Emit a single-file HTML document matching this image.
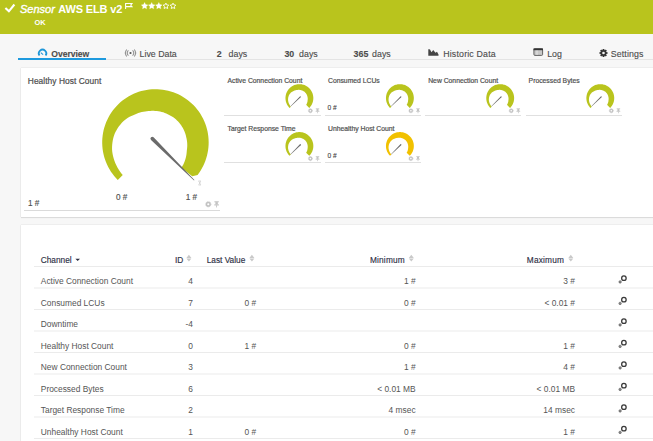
<!DOCTYPE html>
<html><head><meta charset="utf-8">
<style>
html,body{margin:0;padding:0;}
body{width:653px;height:441px;overflow:hidden;position:relative;background:#f7f7f7;font-family:"Liberation Sans",sans-serif;}
.t{position:absolute;white-space:nowrap;line-height:1;}
.hdr{position:absolute;left:0;top:0;width:653px;height:34px;background:#b9c41d;}
.panel{position:absolute;background:#fff;box-shadow:0 0 1px rgba(0,0,0,0.22),0 1px 1px rgba(0,0,0,0.08);}
.tab{color:#4c4c4c;font-size:8.8px;-webkit-text-stroke:0.12px #4c4c4c;}
.b{font-weight:bold;}
.sg{position:absolute;}
.line{position:absolute;height:1px;background:#e0e0e0;}
.ttl{color:#505050;font-size:6.8px;-webkit-text-stroke:0.2px #505050;}
.gt{color:#4e4e4e;-webkit-text-stroke:0.2px #4e4e4e;}
.gv{color:#505050;font-size:8.2px;-webkit-text-stroke:0.15px #505050;}
.sv{color:#404040;font-size:6.6px;-webkit-text-stroke:0.1px #404040;}
.th{color:#2e2f45;font-size:8.3px;-webkit-text-stroke:0.15px #2e2f45;}
.td{color:#555;font-size:8.4px;}
.r{text-align:right;}
.gr{position:absolute;}
.rl{position:absolute;left:34px;width:619px;height:1px;background:#ececec;}
</style></head>
<body>
<div class="hdr"></div>
<!-- header -->
<svg style="position:absolute;left:0;top:0" width="200" height="34">
  <path d="M5.4 7.9 L8.9 11.3 L14.4 4.5" stroke="#fff" stroke-width="2.1" fill="none"/>
  <path d="M125.6 9 V3.5 H132 L130.7 5.1 L132 6.6 H125.6" stroke="#fff" stroke-width="1.05" fill="none"/>
</svg>
<div class="t" style="left:20px;top:3.8px;font-size:11px;font-style:italic;color:#fff;-webkit-text-stroke:0.35px #fff;">Sensor</div>
<div class="t b" style="left:58.3px;top:3.9px;font-size:11px;color:#fff;letter-spacing:-0.15px;">AWS ELB v2</div>
<svg style="position:absolute;left:0;top:0" width="200" height="20"><polygon points="144.60,2.50 145.63,4.58 147.93,4.92 146.26,6.54 146.66,8.83 144.60,7.75 142.54,8.83 142.94,6.54 141.27,4.92 143.57,4.58" fill="#fff" stroke="#fff" stroke-width="0.3" stroke-linejoin="round"/><polygon points="151.70,2.50 152.73,4.58 155.03,4.92 153.36,6.54 153.76,8.83 151.70,7.75 149.64,8.83 150.04,6.54 148.37,4.92 150.67,4.58" fill="#fff" stroke="#fff" stroke-width="0.3" stroke-linejoin="round"/><polygon points="158.80,2.50 159.83,4.58 162.13,4.92 160.46,6.54 160.86,8.83 158.80,7.75 156.74,8.83 157.14,6.54 155.47,4.92 157.77,4.58" fill="#fff" stroke="#fff" stroke-width="0.3" stroke-linejoin="round"/><polygon points="165.90,3.10 166.78,4.89 168.75,5.17 167.33,6.56 167.66,8.53 165.90,7.60 164.14,8.53 164.47,6.56 163.05,5.17 165.02,4.89" fill="none" stroke="#fff" stroke-width="0.9" stroke-linejoin="round"/><polygon points="173.00,3.10 173.88,4.89 175.85,5.17 174.43,6.56 174.76,8.53 173.00,7.60 171.24,8.53 171.57,6.56 170.15,5.17 172.12,4.89" fill="none" stroke="#fff" stroke-width="0.9" stroke-linejoin="round"/></svg>
<div class="t" style="left:34.6px;top:19px;font-size:7.4px;font-weight:bold;color:#fff;letter-spacing:-0.1px;">OK</div>

<!-- tabs -->
<div style="position:absolute;left:18px;top:59px;width:635px;height:1px;background:#e4e4e4;"></div>
<svg style="position:absolute;left:0;top:40px" width="653" height="20">
  <path d="M39.48 15.6 A3.75 3.75 0 1 1 45.62 15.6" stroke="#1e96d8" stroke-width="1.75" fill="none"/>
  <path d="M40.8 12.6 L43.1 14.7" stroke="#1e96d8" stroke-width="1.1"/>
  <g stroke="#666" fill="none" stroke-width="0.8">
    <path d="M128.2 10.3 A4.2 4.2 0 0 0 128.2 15.7"/>
    <path d="M126.5 9.5 A5.8 5.8 0 0 0 126.5 16.5"/>
    <path d="M132.8 10.3 A4.2 4.2 0 0 1 132.8 15.7"/>
    <path d="M134.5 9.5 A5.8 5.8 0 0 1 134.5 16.5"/>
  </g>
  <circle cx="130.5" cy="13" r="1.1" fill="#555"/>
  <path d="M428.3 9.2 V15.8 H438.5 V14.5 L437 11.8 L435.5 12.8 L433.2 10 L431.5 12.2 L430 9.4 L429.2 9.2 Z" fill="#444"/>
  <rect x="533.9" y="8.8" width="8.7" height="6.6" rx="1" fill="#c8c8c8" stroke="#555" stroke-width="0.9"/>
  <rect x="533.5" y="8.4" width="9.5" height="1.8" fill="#333"/>
  <line x1="537" y1="10.5" x2="537" y2="15" stroke="#eee" stroke-width="0.8"/>
</svg>
<svg style="position:absolute;left:598.5px;top:48.5px" width="9" height="8" viewBox="-4.5 -4 9 8">
  <g fill="#333">
    <circle r="2.9"/>
    <g id="tooth"><rect x="-0.9" y="-4" width="1.8" height="8"/></g>
    <rect x="-0.9" y="-4" width="1.8" height="8" transform="rotate(45)"/>
    <rect x="-0.9" y="-4" width="1.8" height="8" transform="rotate(90)"/>
    <rect x="-0.9" y="-4" width="1.8" height="8" transform="rotate(135)"/>
  </g>
  <circle r="1.3" fill="#f4f4f4"/>
</svg>
<div class="t tab b" style="left:51.3px;top:50px;font-size:8.6px;letter-spacing:-0.03px;">Overview</div>
<div style="position:absolute;left:18px;top:58px;width:88px;height:2px;background:#1e9ade;"></div>
<div class="t tab" style="left:139.6px;top:50px;">Live Data</div>
<div class="t tab b" style="left:216.7px;top:50px;">2</div>
<div class="t tab" style="left:228.5px;top:50px;letter-spacing:0.05px;">days</div>
<div class="t tab b" style="left:284.4px;top:50px;">30</div>
<div class="t tab" style="left:299px;top:50px;letter-spacing:0.05px;">days</div>
<div class="t tab b" style="left:353.5px;top:50px;letter-spacing:0.1px;">365</div>
<div class="t tab" style="left:372px;top:50px;letter-spacing:0.05px;">days</div>
<div class="t tab" style="left:443.2px;top:50px;letter-spacing:0.18px;">Historic Data</div>
<div class="t tab" style="left:547.2px;top:50px;">Log</div>
<div class="t tab" style="left:610.7px;top:50px;letter-spacing:0.15px;">Settings</div>

<!-- panel 1 -->
<div class="panel" style="left:21px;top:68px;width:640px;height:149px;"></div>
<div class="t gt" style="left:27.8px;top:77.1px;font-size:8.4px;letter-spacing:0.05px;">Healthy Host Count</div>
<div class="t gv" style="left:116px;top:194px;">0 #</div>
<div class="t gv" style="left:185.7px;top:194px;">1 #</div>
<div class="t gv" style="left:28px;top:200px;">1 #</div>
<div class="line" style="left:24px;top:210px;width:196px;background:#dadada;"></div>
<div class="t ttl" style="left:227.5px;top:78px;">Active Connection Count</div>
<div class="t ttl" style="left:328px;top:78px;">Consumed LCUs</div>
<div class="t ttl" style="left:428.2px;top:78px;">New Connection Count</div>
<div class="t ttl" style="left:528.6px;top:78px;">Processed Bytes</div>
<div class="t ttl" style="left:227.5px;top:126px;">Target Response Time</div>
<div class="t ttl" style="left:328px;top:126px;">Unhealthy Host Count</div>
<div class="t sv" style="left:327.6px;top:105.4px;">0 #</div>
<div class="t sv" style="left:327.6px;top:153.3px;">0 #</div>
<div class="line" style="left:224px;top:115px;width:97px;"></div>
<div class="line" style="left:325px;top:115px;width:96px;"></div>
<div class="line" style="left:425px;top:115px;width:96px;"></div>
<div class="line" style="left:525.5px;top:115px;width:96px;"></div>
<div class="line" style="left:224px;top:162px;width:97px;"></div>
<div class="line" style="left:325px;top:162px;width:96px;"></div>
<svg style="position:absolute;left:0;top:0" width="653" height="441">
<path d="M117.79 180.04 L115.92 178.07 L114.16 176.02 L112.50 173.87 L110.95 171.65 L109.52 169.35 L108.21 166.97 L107.02 164.54 L105.96 162.05 L105.02 159.50 L104.22 156.91 L103.54 154.29 L103.01 151.63 L102.60 148.95 L102.34 146.25 L102.21 143.55 L102.22 140.84 L102.37 138.13 L102.66 135.43 L103.08 132.76 L103.64 130.10 L104.33 127.48 L105.16 124.90 L106.11 122.37 L107.20 119.88 L108.41 117.46 L109.74 115.09 L111.19 112.80 L112.75 110.59 L114.42 108.46 L116.21 106.42 L118.09 104.47 L120.07 102.61 L122.14 100.87 L124.30 99.22 L126.53 97.70 L128.85 96.28 L131.23 94.99 L133.67 93.82 L136.17 92.77 L138.73 91.86 L141.32 91.07 L143.95 90.42 L146.61 89.91 L149.30 89.52 L151.99 89.28 L154.70 89.17 L157.41 89.21 L160.12 89.38 L162.81 89.68 L165.49 90.13 L168.13 90.71 L170.75 91.42 L173.32 92.27 L175.85 93.24 L178.33 94.35 L180.74 95.57 L183.09 96.92 L185.37 98.39 L187.57 99.97 L189.69 101.66 L191.72 103.46 L193.66 105.36 L195.49 107.35 L197.23 109.44 L198.85 111.61 L200.36 113.86 L201.75 116.18 L203.03 118.57 L204.18 121.03 L205.21 123.54 L206.10 126.09 L206.87 128.69 L207.50 131.33 L207.99 134.00 L208.35 136.68 L208.57 139.38 L208.66 142.09 L208.61 144.80 L208.41 147.51 L208.09 150.20 L207.62 152.87 L207.02 155.51 L206.29 158.12 L205.42 160.69 L204.42 163.21 L203.30 165.68 L202.05 168.08 L200.69 170.42 L199.20 172.69 L197.60 174.88 L192.2 176.2 L181.45 167.75 L182.44 166.09 L183.33 164.41 L184.11 162.69 L184.80 160.95 L185.38 159.20 L185.85 157.44 L186.23 155.67 L186.51 153.91 L186.68 152.15 L186.82 150.42 L187.05 148.74 L187.20 147.06 L187.26 145.39 L187.23 143.71 L187.11 142.05 L186.90 140.41 L186.61 138.79 L186.24 137.19 L185.87 135.60 L185.43 134.03 L184.90 132.50 L184.30 130.99 L183.62 129.52 L182.87 128.09 L182.04 126.70 L181.15 125.36 L180.20 124.05 L179.20 122.79 L178.14 121.59 L177.01 120.44 L175.83 119.35 L174.59 118.32 L173.31 117.36 L171.97 116.47 L170.59 115.65 L169.17 114.91 L167.73 114.19 L166.27 113.50 L164.78 112.89 L163.25 112.36 L161.69 111.90 L160.10 111.53 L158.49 111.24 L156.86 111.03 L155.22 110.91 L153.58 110.87 L151.92 110.87 L150.24 110.88 L148.56 110.99 L146.87 111.18 L145.19 111.47 L143.47 111.75 L141.74 112.10 L140.02 112.54 L138.31 113.09 L136.61 113.73 L134.93 114.47 L133.17 115.17 L131.39 115.94 L129.63 116.82 L127.89 117.82 L126.20 118.92 L124.55 120.15 L123.05 121.55 L121.62 123.04 L120.25 124.63 L118.96 126.31 L117.75 128.08 L116.63 129.92 L115.60 131.85 L114.66 133.85 L113.88 135.93 L113.29 138.08 L112.80 140.27 L112.44 142.49 L112.19 144.75 L112.06 147.04 L112.05 149.35 L112.25 151.65 L112.61 153.94 L113.09 156.22 L113.69 158.48 L114.42 160.71 L115.26 162.91 L116.22 165.07 L117.30 167.19 L118.50 169.26 L119.80 171.27 L121.22 173.21 L122.74 175.09 Z" fill="#b9c41d"/>
<path d="M151.03 139.88 L194.02 180.38 L194.38 180.02 L153.57 137.32 A1.80 1.80 0 0 0 151.03 139.88 Z" fill="#6b6b6b"/>
<g stroke="#ccc" stroke-width="0.7" fill="none"><path d="M198.3 181 H201 M198.5 185 H201 M198.8 181.2 L200.7 184.8 M200.7 181.2 L198.8 184.8"/></g>
<g transform="translate(208.30 204.20) scale(0.95)" fill="none" stroke="#c2c2c2"><circle r="1.9" stroke-width="1.6"/><circle r="2.75" stroke-width="0.9" stroke-dasharray="0.9 0.75"/></g><g transform="translate(216.60 204.20) scale(0.95)" fill="#c2c2c2"><rect x="-2.3" y="-3.1" width="4.6" height="1.1"/><rect x="-1.3" y="-2.2" width="2.6" height="2.6"/><rect x="-2.5" y="0.2" width="5" height="1.1"/><rect x="-0.45" y="1" width="0.9" height="2.4"/></g>
<path d="M289.55 107.95 L289.05 107.42 L288.57 106.87 L288.13 106.29 L287.72 105.69 L287.34 105.07 L286.99 104.42 L286.67 103.77 L286.39 103.09 L286.15 102.40 L285.94 101.71 L285.77 101.00 L285.64 100.28 L285.55 99.56 L285.49 98.83 L285.47 98.10 L285.49 97.37 L285.55 96.64 L285.64 95.92 L285.77 95.20 L285.94 94.49 L286.15 93.80 L286.39 93.11 L286.67 92.43 L286.99 91.78 L287.34 91.13 L287.72 90.51 L288.13 89.91 L288.57 89.33 L289.05 88.78 L289.55 88.25 L290.08 87.75 L290.63 87.27 L291.21 86.83 L291.81 86.42 L292.43 86.04 L293.08 85.69 L293.73 85.37 L294.41 85.09 L295.10 84.85 L295.79 84.64 L296.50 84.47 L297.22 84.34 L297.94 84.25 L298.67 84.19 L299.40 84.17 L300.13 84.19 L300.86 84.25 L301.58 84.34 L302.30 84.47 L303.01 84.64 L303.70 84.85 L304.39 85.09 L305.07 85.37 L305.72 85.69 L306.37 86.04 L306.99 86.42 L307.59 86.83 L308.17 87.27 L308.72 87.75 L309.25 88.25 L309.75 88.78 L310.23 89.33 L310.67 89.91 L311.08 90.51 L311.46 91.13 L311.81 91.78 L312.13 92.43 L312.41 93.11 L312.65 93.80 L312.86 94.49 L313.03 95.20 L313.16 95.92 L313.25 96.64 L313.31 97.37 L313.33 98.10 L313.31 98.83 L313.25 99.56 L313.16 100.28 L313.03 101.00 L312.86 101.71 L312.65 102.40 L312.41 103.09 L312.13 103.77 L311.81 104.42 L311.46 105.07 L311.08 105.69 L310.67 106.29 L310.23 106.87 L309.75 107.42 L309.25 107.95 L306.14 104.84 L306.41 104.41 L306.65 103.97 L306.86 103.52 L307.04 103.06 L307.20 102.61 L307.33 102.14 L307.44 101.68 L307.52 101.22 L307.57 100.75 L307.60 100.30 L307.66 99.86 L307.71 99.42 L307.73 98.98 L307.72 98.54 L307.70 98.10 L307.65 97.67 L307.58 97.24 L307.48 96.82 L307.39 96.40 L307.27 95.99 L307.14 95.58 L306.99 95.19 L306.81 94.80 L306.62 94.42 L306.41 94.06 L306.17 93.70 L305.93 93.36 L305.67 93.02 L305.39 92.71 L305.10 92.40 L304.79 92.11 L304.47 91.84 L304.13 91.59 L303.78 91.35 L303.42 91.13 L303.05 90.93 L302.67 90.75 L302.29 90.56 L301.90 90.40 L301.50 90.26 L301.09 90.13 L300.68 90.03 L300.26 89.95 L299.83 89.90 L299.40 89.86 L298.97 89.85 L298.53 89.85 L298.09 89.85 L297.65 89.88 L297.21 89.92 L296.77 90.00 L296.32 90.07 L295.86 90.16 L295.41 90.27 L294.96 90.41 L294.52 90.58 L294.08 90.77 L293.62 90.96 L293.15 91.16 L292.69 91.39 L292.23 91.64 L291.78 91.93 L291.35 92.25 L290.95 92.62 L290.58 93.01 L290.22 93.42 L289.88 93.86 L289.56 94.32 L289.26 94.81 L288.99 95.31 L288.74 95.83 L288.53 96.38 L288.38 96.94 L288.25 97.52 L288.15 98.10 L288.09 98.69 L288.05 99.29 L288.05 99.90 L288.10 100.50 L288.19 101.10 L288.32 101.70 L288.47 102.29 L288.66 102.88 L288.88 103.46 L289.14 104.03 L289.42 104.58 L289.73 105.12 L290.07 105.65 L290.45 106.16 L290.85 106.65 Z" fill="#b9c41d"/><path d="M299.88 96.42 L290.48 106.28 L290.72 106.52 L300.72 97.28 A0.60 0.60 0 0 0 299.88 96.42 Z" fill="#6b6b6b"/><g transform="translate(310.40 110.70) scale(0.75)" fill="none" stroke="#c2c2c2"><circle r="1.9" stroke-width="1.6"/><circle r="2.75" stroke-width="0.9" stroke-dasharray="0.9 0.75"/></g><g transform="translate(317.50 110.70) scale(0.75)" fill="#c2c2c2"><rect x="-2.3" y="-3.1" width="4.6" height="1.1"/><rect x="-1.3" y="-2.2" width="2.6" height="2.6"/><rect x="-2.5" y="0.2" width="5" height="1.1"/><rect x="-0.45" y="1" width="0.9" height="2.4"/></g>
<path d="M390.05 107.95 L389.55 107.42 L389.07 106.87 L388.63 106.29 L388.22 105.69 L387.84 105.07 L387.49 104.42 L387.17 103.77 L386.89 103.09 L386.65 102.40 L386.44 101.71 L386.27 101.00 L386.14 100.28 L386.05 99.56 L385.99 98.83 L385.97 98.10 L385.99 97.37 L386.05 96.64 L386.14 95.92 L386.27 95.20 L386.44 94.49 L386.65 93.80 L386.89 93.11 L387.17 92.43 L387.49 91.78 L387.84 91.13 L388.22 90.51 L388.63 89.91 L389.07 89.33 L389.55 88.78 L390.05 88.25 L390.58 87.75 L391.13 87.27 L391.71 86.83 L392.31 86.42 L392.93 86.04 L393.58 85.69 L394.23 85.37 L394.91 85.09 L395.60 84.85 L396.29 84.64 L397.00 84.47 L397.72 84.34 L398.44 84.25 L399.17 84.19 L399.90 84.17 L400.63 84.19 L401.36 84.25 L402.08 84.34 L402.80 84.47 L403.51 84.64 L404.20 84.85 L404.89 85.09 L405.57 85.37 L406.22 85.69 L406.87 86.04 L407.49 86.42 L408.09 86.83 L408.67 87.27 L409.22 87.75 L409.75 88.25 L410.25 88.78 L410.73 89.33 L411.17 89.91 L411.58 90.51 L411.96 91.13 L412.31 91.78 L412.63 92.43 L412.91 93.11 L413.15 93.80 L413.36 94.49 L413.53 95.20 L413.66 95.92 L413.75 96.64 L413.81 97.37 L413.83 98.10 L413.81 98.83 L413.75 99.56 L413.66 100.28 L413.53 101.00 L413.36 101.71 L413.15 102.40 L412.91 103.09 L412.63 103.77 L412.31 104.42 L411.96 105.07 L411.58 105.69 L411.17 106.29 L410.73 106.87 L410.25 107.42 L409.75 107.95 L406.64 104.84 L406.91 104.41 L407.15 103.97 L407.36 103.52 L407.54 103.06 L407.70 102.61 L407.83 102.14 L407.94 101.68 L408.02 101.22 L408.07 100.75 L408.10 100.30 L408.16 99.86 L408.21 99.42 L408.23 98.98 L408.22 98.54 L408.20 98.10 L408.15 97.67 L408.08 97.24 L407.98 96.82 L407.89 96.40 L407.77 95.99 L407.64 95.58 L407.49 95.19 L407.31 94.80 L407.12 94.42 L406.91 94.06 L406.67 93.70 L406.43 93.36 L406.17 93.02 L405.89 92.71 L405.60 92.40 L405.29 92.11 L404.97 91.84 L404.63 91.59 L404.28 91.35 L403.92 91.13 L403.55 90.93 L403.17 90.75 L402.79 90.56 L402.40 90.40 L402.00 90.26 L401.59 90.13 L401.18 90.03 L400.76 89.95 L400.33 89.90 L399.90 89.86 L399.47 89.85 L399.03 89.85 L398.59 89.85 L398.15 89.88 L397.71 89.92 L397.27 90.00 L396.82 90.07 L396.36 90.16 L395.91 90.27 L395.46 90.41 L395.02 90.58 L394.58 90.77 L394.12 90.96 L393.65 91.16 L393.19 91.39 L392.73 91.64 L392.28 91.93 L391.85 92.25 L391.45 92.62 L391.08 93.01 L390.72 93.42 L390.38 93.86 L390.06 94.32 L389.76 94.81 L389.49 95.31 L389.24 95.83 L389.03 96.38 L388.88 96.94 L388.75 97.52 L388.65 98.10 L388.59 98.69 L388.55 99.29 L388.55 99.90 L388.60 100.50 L388.69 101.10 L388.82 101.70 L388.97 102.29 L389.16 102.88 L389.38 103.46 L389.64 104.03 L389.92 104.58 L390.23 105.12 L390.57 105.65 L390.95 106.16 L391.35 106.65 Z" fill="#b9c41d"/><path d="M400.38 96.42 L390.98 106.28 L391.22 106.52 L401.22 97.28 A0.60 0.60 0 0 0 400.38 96.42 Z" fill="#6b6b6b"/><g transform="translate(410.90 110.70) scale(0.75)" fill="none" stroke="#c2c2c2"><circle r="1.9" stroke-width="1.6"/><circle r="2.75" stroke-width="0.9" stroke-dasharray="0.9 0.75"/></g><g transform="translate(418.00 110.70) scale(0.75)" fill="#c2c2c2"><rect x="-2.3" y="-3.1" width="4.6" height="1.1"/><rect x="-1.3" y="-2.2" width="2.6" height="2.6"/><rect x="-2.5" y="0.2" width="5" height="1.1"/><rect x="-0.45" y="1" width="0.9" height="2.4"/></g>
<path d="M490.35 107.95 L489.85 107.42 L489.37 106.87 L488.93 106.29 L488.52 105.69 L488.14 105.07 L487.79 104.42 L487.47 103.77 L487.19 103.09 L486.95 102.40 L486.74 101.71 L486.57 101.00 L486.44 100.28 L486.35 99.56 L486.29 98.83 L486.27 98.10 L486.29 97.37 L486.35 96.64 L486.44 95.92 L486.57 95.20 L486.74 94.49 L486.95 93.80 L487.19 93.11 L487.47 92.43 L487.79 91.78 L488.14 91.13 L488.52 90.51 L488.93 89.91 L489.37 89.33 L489.85 88.78 L490.35 88.25 L490.88 87.75 L491.43 87.27 L492.01 86.83 L492.61 86.42 L493.23 86.04 L493.88 85.69 L494.53 85.37 L495.21 85.09 L495.90 84.85 L496.59 84.64 L497.30 84.47 L498.02 84.34 L498.74 84.25 L499.47 84.19 L500.20 84.17 L500.93 84.19 L501.66 84.25 L502.38 84.34 L503.10 84.47 L503.81 84.64 L504.50 84.85 L505.19 85.09 L505.87 85.37 L506.52 85.69 L507.17 86.04 L507.79 86.42 L508.39 86.83 L508.97 87.27 L509.52 87.75 L510.05 88.25 L510.55 88.78 L511.03 89.33 L511.47 89.91 L511.88 90.51 L512.26 91.13 L512.61 91.78 L512.93 92.43 L513.21 93.11 L513.45 93.80 L513.66 94.49 L513.83 95.20 L513.96 95.92 L514.05 96.64 L514.11 97.37 L514.13 98.10 L514.11 98.83 L514.05 99.56 L513.96 100.28 L513.83 101.00 L513.66 101.71 L513.45 102.40 L513.21 103.09 L512.93 103.77 L512.61 104.42 L512.26 105.07 L511.88 105.69 L511.47 106.29 L511.03 106.87 L510.55 107.42 L510.05 107.95 L506.94 104.84 L507.21 104.41 L507.45 103.97 L507.66 103.52 L507.84 103.06 L508.00 102.61 L508.13 102.14 L508.24 101.68 L508.32 101.22 L508.37 100.75 L508.40 100.30 L508.46 99.86 L508.51 99.42 L508.53 98.98 L508.52 98.54 L508.50 98.10 L508.45 97.67 L508.38 97.24 L508.28 96.82 L508.19 96.40 L508.07 95.99 L507.94 95.58 L507.79 95.19 L507.61 94.80 L507.42 94.42 L507.21 94.06 L506.97 93.70 L506.73 93.36 L506.47 93.02 L506.19 92.71 L505.90 92.40 L505.59 92.11 L505.27 91.84 L504.93 91.59 L504.58 91.35 L504.22 91.13 L503.85 90.93 L503.47 90.75 L503.09 90.56 L502.70 90.40 L502.30 90.26 L501.89 90.13 L501.48 90.03 L501.06 89.95 L500.63 89.90 L500.20 89.86 L499.77 89.85 L499.33 89.85 L498.89 89.85 L498.45 89.88 L498.01 89.92 L497.57 90.00 L497.12 90.07 L496.66 90.16 L496.21 90.27 L495.76 90.41 L495.32 90.58 L494.88 90.77 L494.42 90.96 L493.95 91.16 L493.49 91.39 L493.03 91.64 L492.58 91.93 L492.15 92.25 L491.75 92.62 L491.38 93.01 L491.02 93.42 L490.68 93.86 L490.36 94.32 L490.06 94.81 L489.79 95.31 L489.54 95.83 L489.33 96.38 L489.18 96.94 L489.05 97.52 L488.95 98.10 L488.89 98.69 L488.85 99.29 L488.85 99.90 L488.90 100.50 L488.99 101.10 L489.12 101.70 L489.27 102.29 L489.46 102.88 L489.68 103.46 L489.94 104.03 L490.22 104.58 L490.53 105.12 L490.87 105.65 L491.25 106.16 L491.65 106.65 Z" fill="#b9c41d"/><path d="M500.68 96.42 L491.28 106.28 L491.52 106.52 L501.52 97.28 A0.60 0.60 0 0 0 500.68 96.42 Z" fill="#6b6b6b"/><g transform="translate(511.20 110.70) scale(0.75)" fill="none" stroke="#c2c2c2"><circle r="1.9" stroke-width="1.6"/><circle r="2.75" stroke-width="0.9" stroke-dasharray="0.9 0.75"/></g><g transform="translate(518.30 110.70) scale(0.75)" fill="#c2c2c2"><rect x="-2.3" y="-3.1" width="4.6" height="1.1"/><rect x="-1.3" y="-2.2" width="2.6" height="2.6"/><rect x="-2.5" y="0.2" width="5" height="1.1"/><rect x="-0.45" y="1" width="0.9" height="2.4"/></g>
<path d="M590.45 107.95 L589.95 107.42 L589.47 106.87 L589.03 106.29 L588.62 105.69 L588.24 105.07 L587.89 104.42 L587.57 103.77 L587.29 103.09 L587.05 102.40 L586.84 101.71 L586.67 101.00 L586.54 100.28 L586.45 99.56 L586.39 98.83 L586.37 98.10 L586.39 97.37 L586.45 96.64 L586.54 95.92 L586.67 95.20 L586.84 94.49 L587.05 93.80 L587.29 93.11 L587.57 92.43 L587.89 91.78 L588.24 91.13 L588.62 90.51 L589.03 89.91 L589.47 89.33 L589.95 88.78 L590.45 88.25 L590.98 87.75 L591.53 87.27 L592.11 86.83 L592.71 86.42 L593.33 86.04 L593.98 85.69 L594.63 85.37 L595.31 85.09 L596.00 84.85 L596.69 84.64 L597.40 84.47 L598.12 84.34 L598.84 84.25 L599.57 84.19 L600.30 84.17 L601.03 84.19 L601.76 84.25 L602.48 84.34 L603.20 84.47 L603.91 84.64 L604.60 84.85 L605.29 85.09 L605.97 85.37 L606.62 85.69 L607.27 86.04 L607.89 86.42 L608.49 86.83 L609.07 87.27 L609.62 87.75 L610.15 88.25 L610.65 88.78 L611.13 89.33 L611.57 89.91 L611.98 90.51 L612.36 91.13 L612.71 91.78 L613.03 92.43 L613.31 93.11 L613.55 93.80 L613.76 94.49 L613.93 95.20 L614.06 95.92 L614.15 96.64 L614.21 97.37 L614.23 98.10 L614.21 98.83 L614.15 99.56 L614.06 100.28 L613.93 101.00 L613.76 101.71 L613.55 102.40 L613.31 103.09 L613.03 103.77 L612.71 104.42 L612.36 105.07 L611.98 105.69 L611.57 106.29 L611.13 106.87 L610.65 107.42 L610.15 107.95 L607.04 104.84 L607.31 104.41 L607.55 103.97 L607.76 103.52 L607.94 103.06 L608.10 102.61 L608.23 102.14 L608.34 101.68 L608.42 101.22 L608.47 100.75 L608.50 100.30 L608.56 99.86 L608.61 99.42 L608.63 98.98 L608.62 98.54 L608.60 98.10 L608.55 97.67 L608.48 97.24 L608.38 96.82 L608.29 96.40 L608.17 95.99 L608.04 95.58 L607.89 95.19 L607.71 94.80 L607.52 94.42 L607.31 94.06 L607.07 93.70 L606.83 93.36 L606.57 93.02 L606.29 92.71 L606.00 92.40 L605.69 92.11 L605.37 91.84 L605.03 91.59 L604.68 91.35 L604.32 91.13 L603.95 90.93 L603.57 90.75 L603.19 90.56 L602.80 90.40 L602.40 90.26 L601.99 90.13 L601.58 90.03 L601.16 89.95 L600.73 89.90 L600.30 89.86 L599.87 89.85 L599.43 89.85 L598.99 89.85 L598.55 89.88 L598.11 89.92 L597.67 90.00 L597.22 90.07 L596.76 90.16 L596.31 90.27 L595.86 90.41 L595.42 90.58 L594.98 90.77 L594.52 90.96 L594.05 91.16 L593.59 91.39 L593.13 91.64 L592.68 91.93 L592.25 92.25 L591.85 92.62 L591.48 93.01 L591.12 93.42 L590.78 93.86 L590.46 94.32 L590.16 94.81 L589.89 95.31 L589.64 95.83 L589.43 96.38 L589.28 96.94 L589.15 97.52 L589.05 98.10 L588.99 98.69 L588.95 99.29 L588.95 99.90 L589.00 100.50 L589.09 101.10 L589.22 101.70 L589.37 102.29 L589.56 102.88 L589.78 103.46 L590.04 104.03 L590.32 104.58 L590.63 105.12 L590.97 105.65 L591.35 106.16 L591.75 106.65 Z" fill="#b9c41d"/><path d="M600.78 96.42 L591.38 106.28 L591.62 106.52 L601.62 97.28 A0.60 0.60 0 0 0 600.78 96.42 Z" fill="#6b6b6b"/><g transform="translate(611.30 110.70) scale(0.75)" fill="none" stroke="#c2c2c2"><circle r="1.9" stroke-width="1.6"/><circle r="2.75" stroke-width="0.9" stroke-dasharray="0.9 0.75"/></g><g transform="translate(618.40 110.70) scale(0.75)" fill="#c2c2c2"><rect x="-2.3" y="-3.1" width="4.6" height="1.1"/><rect x="-1.3" y="-2.2" width="2.6" height="2.6"/><rect x="-2.5" y="0.2" width="5" height="1.1"/><rect x="-0.45" y="1" width="0.9" height="2.4"/></g>
<path d="M289.55 155.85 L289.05 155.32 L288.57 154.77 L288.13 154.19 L287.72 153.59 L287.34 152.97 L286.99 152.32 L286.67 151.67 L286.39 150.99 L286.15 150.30 L285.94 149.61 L285.77 148.90 L285.64 148.18 L285.55 147.46 L285.49 146.73 L285.47 146.00 L285.49 145.27 L285.55 144.54 L285.64 143.82 L285.77 143.10 L285.94 142.39 L286.15 141.70 L286.39 141.01 L286.67 140.33 L286.99 139.68 L287.34 139.03 L287.72 138.41 L288.13 137.81 L288.57 137.23 L289.05 136.68 L289.55 136.15 L290.08 135.65 L290.63 135.17 L291.21 134.73 L291.81 134.32 L292.43 133.94 L293.08 133.59 L293.73 133.27 L294.41 132.99 L295.10 132.75 L295.79 132.54 L296.50 132.37 L297.22 132.24 L297.94 132.15 L298.67 132.09 L299.40 132.07 L300.13 132.09 L300.86 132.15 L301.58 132.24 L302.30 132.37 L303.01 132.54 L303.70 132.75 L304.39 132.99 L305.07 133.27 L305.72 133.59 L306.37 133.94 L306.99 134.32 L307.59 134.73 L308.17 135.17 L308.72 135.65 L309.25 136.15 L309.75 136.68 L310.23 137.23 L310.67 137.81 L311.08 138.41 L311.46 139.03 L311.81 139.68 L312.13 140.33 L312.41 141.01 L312.65 141.70 L312.86 142.39 L313.03 143.10 L313.16 143.82 L313.25 144.54 L313.31 145.27 L313.33 146.00 L313.31 146.73 L313.25 147.46 L313.16 148.18 L313.03 148.90 L312.86 149.61 L312.65 150.30 L312.41 150.99 L312.13 151.67 L311.81 152.32 L311.46 152.97 L311.08 153.59 L310.67 154.19 L310.23 154.77 L309.75 155.32 L309.25 155.85 L306.14 152.74 L306.41 152.31 L306.65 151.87 L306.86 151.42 L307.04 150.96 L307.20 150.51 L307.33 150.04 L307.44 149.58 L307.52 149.12 L307.57 148.65 L307.60 148.20 L307.66 147.76 L307.71 147.32 L307.73 146.88 L307.72 146.44 L307.70 146.00 L307.65 145.57 L307.58 145.14 L307.48 144.72 L307.39 144.30 L307.27 143.89 L307.14 143.48 L306.99 143.09 L306.81 142.70 L306.62 142.32 L306.41 141.96 L306.17 141.60 L305.93 141.26 L305.67 140.92 L305.39 140.61 L305.10 140.30 L304.79 140.01 L304.47 139.74 L304.13 139.49 L303.78 139.25 L303.42 139.03 L303.05 138.83 L302.67 138.65 L302.29 138.46 L301.90 138.30 L301.50 138.16 L301.09 138.03 L300.68 137.93 L300.26 137.85 L299.83 137.80 L299.40 137.76 L298.97 137.75 L298.53 137.75 L298.09 137.75 L297.65 137.78 L297.21 137.82 L296.77 137.90 L296.32 137.97 L295.86 138.06 L295.41 138.17 L294.96 138.31 L294.52 138.48 L294.08 138.67 L293.62 138.86 L293.15 139.06 L292.69 139.29 L292.23 139.54 L291.78 139.83 L291.35 140.15 L290.95 140.52 L290.58 140.91 L290.22 141.32 L289.88 141.76 L289.56 142.22 L289.26 142.71 L288.99 143.21 L288.74 143.73 L288.53 144.28 L288.38 144.84 L288.25 145.42 L288.15 146.00 L288.09 146.59 L288.05 147.19 L288.05 147.80 L288.10 148.40 L288.19 149.00 L288.32 149.60 L288.47 150.19 L288.66 150.78 L288.88 151.36 L289.14 151.93 L289.42 152.48 L289.73 153.02 L290.07 153.55 L290.45 154.06 L290.85 154.55 Z" fill="#b9c41d"/><path d="M299.88 144.32 L290.48 154.18 L290.72 154.42 L300.72 145.18 A0.60 0.60 0 0 0 299.88 144.32 Z" fill="#6b6b6b"/><g transform="translate(310.40 158.60) scale(0.75)" fill="none" stroke="#c2c2c2"><circle r="1.9" stroke-width="1.6"/><circle r="2.75" stroke-width="0.9" stroke-dasharray="0.9 0.75"/></g><g transform="translate(317.50 158.60) scale(0.75)" fill="#c2c2c2"><rect x="-2.3" y="-3.1" width="4.6" height="1.1"/><rect x="-1.3" y="-2.2" width="2.6" height="2.6"/><rect x="-2.5" y="0.2" width="5" height="1.1"/><rect x="-0.45" y="1" width="0.9" height="2.4"/></g>
<path d="M390.05 155.85 L389.55 155.32 L389.07 154.77 L388.63 154.19 L388.22 153.59 L387.84 152.97 L387.49 152.32 L387.17 151.67 L386.89 150.99 L386.65 150.30 L386.44 149.61 L386.27 148.90 L386.14 148.18 L386.05 147.46 L385.99 146.73 L385.97 146.00 L385.99 145.27 L386.05 144.54 L386.14 143.82 L386.27 143.10 L386.44 142.39 L386.65 141.70 L386.89 141.01 L387.17 140.33 L387.49 139.68 L387.84 139.03 L388.22 138.41 L388.63 137.81 L389.07 137.23 L389.55 136.68 L390.05 136.15 L390.58 135.65 L391.13 135.17 L391.71 134.73 L392.31 134.32 L392.93 133.94 L393.58 133.59 L394.23 133.27 L394.91 132.99 L395.60 132.75 L396.29 132.54 L397.00 132.37 L397.72 132.24 L398.44 132.15 L399.17 132.09 L399.90 132.07 L400.63 132.09 L401.36 132.15 L402.08 132.24 L402.80 132.37 L403.51 132.54 L404.20 132.75 L404.89 132.99 L405.57 133.27 L406.22 133.59 L406.87 133.94 L407.49 134.32 L408.09 134.73 L408.67 135.17 L409.22 135.65 L409.75 136.15 L410.25 136.68 L410.73 137.23 L411.17 137.81 L411.58 138.41 L411.96 139.03 L412.31 139.68 L412.63 140.33 L412.91 141.01 L413.15 141.70 L413.36 142.39 L413.53 143.10 L413.66 143.82 L413.75 144.54 L413.81 145.27 L413.83 146.00 L413.81 146.73 L413.75 147.46 L413.66 148.18 L413.53 148.90 L413.36 149.61 L413.15 150.30 L412.91 150.99 L412.63 151.67 L412.31 152.32 L411.96 152.97 L411.58 153.59 L411.17 154.19 L410.73 154.77 L410.25 155.32 L409.75 155.85 L406.64 152.74 L406.91 152.31 L407.15 151.87 L407.36 151.42 L407.54 150.96 L407.70 150.51 L407.83 150.04 L407.94 149.58 L408.02 149.12 L408.07 148.65 L408.10 148.20 L408.16 147.76 L408.21 147.32 L408.23 146.88 L408.22 146.44 L408.20 146.00 L408.15 145.57 L408.08 145.14 L407.98 144.72 L407.89 144.30 L407.77 143.89 L407.64 143.48 L407.49 143.09 L407.31 142.70 L407.12 142.32 L406.91 141.96 L406.67 141.60 L406.43 141.26 L406.17 140.92 L405.89 140.61 L405.60 140.30 L405.29 140.01 L404.97 139.74 L404.63 139.49 L404.28 139.25 L403.92 139.03 L403.55 138.83 L403.17 138.65 L402.79 138.46 L402.40 138.30 L402.00 138.16 L401.59 138.03 L401.18 137.93 L400.76 137.85 L400.33 137.80 L399.90 137.76 L399.47 137.75 L399.03 137.75 L398.59 137.75 L398.15 137.78 L397.71 137.82 L397.27 137.90 L396.82 137.97 L396.36 138.06 L395.91 138.17 L395.46 138.31 L395.02 138.48 L394.58 138.67 L394.12 138.86 L393.65 139.06 L393.19 139.29 L392.73 139.54 L392.28 139.83 L391.85 140.15 L391.45 140.52 L391.08 140.91 L390.72 141.32 L390.38 141.76 L390.06 142.22 L389.76 142.71 L389.49 143.21 L389.24 143.73 L389.03 144.28 L388.88 144.84 L388.75 145.42 L388.65 146.00 L388.59 146.59 L388.55 147.19 L388.55 147.80 L388.60 148.40 L388.69 149.00 L388.82 149.60 L388.97 150.19 L389.16 150.78 L389.38 151.36 L389.64 151.93 L389.92 152.48 L390.23 153.02 L390.57 153.55 L390.95 154.06 L391.35 154.55 Z" fill="#f1c100"/><path d="M400.38 144.32 L390.98 154.18 L391.22 154.42 L401.22 145.18 A0.60 0.60 0 0 0 400.38 144.32 Z" fill="#6b6b6b"/><g transform="translate(410.90 158.60) scale(0.75)" fill="none" stroke="#c2c2c2"><circle r="1.9" stroke-width="1.6"/><circle r="2.75" stroke-width="0.9" stroke-dasharray="0.9 0.75"/></g><g transform="translate(418.00 158.60) scale(0.75)" fill="#c2c2c2"><rect x="-2.3" y="-3.1" width="4.6" height="1.1"/><rect x="-1.3" y="-2.2" width="2.6" height="2.6"/><rect x="-2.5" y="0.2" width="5" height="1.1"/><rect x="-0.45" y="1" width="0.9" height="2.4"/></g>
</svg>

<!-- panel 2 -->
<div class="panel" style="left:21px;top:225px;width:640px;height:230px;"></div>
<div class="t th" style="left:40.7px;top:256px;">Channel</div>
<div class="t th" style="left:175px;top:256px;">ID</div>
<div class="t th" style="left:206.7px;top:256px;">Last Value</div>
<div class="t th" style="left:369.9px;top:256px;letter-spacing:0.2px;">Minimum</div>
<div class="t th" style="left:526.8px;top:256px;letter-spacing:0.2px;">Maximum</div>
<div class="t td" style="left:40.8px;top:277.0px;">Active Connection Count</div>
<div class="t td r" style="right:460px;top:277.0px;">4</div>
<div class="t td r" style="right:237.39999999999998px;top:277.0px;">1 #</div>
<div class="t td r" style="right:78px;top:277.0px;">3 #</div>
<div class="t td" style="left:40.8px;top:298.5px;">Consumed LCUs</div>
<div class="t td r" style="right:460px;top:298.5px;">7</div>
<div class="t td r" style="right:396.8px;top:298.5px;">0 #</div>
<div class="t td r" style="right:237.39999999999998px;top:298.5px;">0 #</div>
<div class="t td r" style="right:78px;top:298.5px;">&lt; 0.01 #</div>
<div class="t td" style="left:40.8px;top:320.0px;">Downtime</div>
<div class="t td r" style="right:460px;top:320.0px;">-4</div>
<div class="t td" style="left:40.8px;top:341.5px;">Healthy Host Count</div>
<div class="t td r" style="right:460px;top:341.5px;">0</div>
<div class="t td r" style="right:396.8px;top:341.5px;">1 #</div>
<div class="t td r" style="right:237.39999999999998px;top:341.5px;">0 #</div>
<div class="t td r" style="right:78px;top:341.5px;">1 #</div>
<div class="t td" style="left:40.8px;top:363.0px;">New Connection Count</div>
<div class="t td r" style="right:460px;top:363.0px;">3</div>
<div class="t td r" style="right:237.39999999999998px;top:363.0px;">1 #</div>
<div class="t td r" style="right:78px;top:363.0px;">4 #</div>
<div class="t td" style="left:40.8px;top:384.5px;">Processed Bytes</div>
<div class="t td r" style="right:460px;top:384.5px;">6</div>
<div class="t td r" style="right:237.39999999999998px;top:384.5px;">&lt; 0.01 MB</div>
<div class="t td r" style="right:78px;top:384.5px;">&lt; 0.01 MB</div>
<div class="t td" style="left:40.8px;top:406.0px;">Target Response Time</div>
<div class="t td r" style="right:460px;top:406.0px;">2</div>
<div class="t td r" style="right:237.39999999999998px;top:406.0px;">4 msec</div>
<div class="t td r" style="right:78px;top:406.0px;">14 msec</div>
<div class="t td" style="left:40.8px;top:427.5px;">Unhealthy Host Count</div>
<div class="t td r" style="right:460px;top:427.5px;">1</div>
<div class="t td r" style="right:396.8px;top:427.5px;">0 #</div>
<div class="t td r" style="right:237.39999999999998px;top:427.5px;">0 #</div>
<div class="t td r" style="right:78px;top:427.5px;">1 #</div>
<svg style="position:absolute;left:0;top:0" width="653" height="441">
<path d="M75.4 258.7 H80 L77.7 261.1 Z" fill="#2a2c40"/>
<path d="M186.4 257.9 L188.9 254.7 L191.4 257.9 Z M186.4 258.5 L188.9 261.6 L191.4 258.5 Z" fill="#c9c9c9"/>
<path d="M249.4 257.9 L251.9 254.7 L254.4 257.9 Z M249.4 258.5 L251.9 261.6 L254.4 258.5 Z" fill="#c9c9c9"/>
<path d="M408.8 257.9 L411.3 254.7 L413.8 257.9 Z M408.8 258.5 L411.3 261.6 L413.8 258.5 Z" fill="#c9c9c9"/>
<path d="M568.3 257.9 L570.8 254.7 L573.3 257.9 Z M568.3 258.5 L570.8 261.6 L573.3 258.5 Z" fill="#c9c9c9"/>
<rect x="34" y="266.0" width="619" height="1" fill="#ebebeb"/>
<rect x="34" y="287.5" width="619" height="1" fill="#ebebeb"/>
<rect x="34" y="309.0" width="619" height="1" fill="#ebebeb"/>
<rect x="34" y="330.5" width="619" height="1" fill="#ebebeb"/>
<rect x="34" y="352.0" width="619" height="1" fill="#ebebeb"/>
<rect x="34" y="373.5" width="619" height="1" fill="#ebebeb"/>
<rect x="34" y="395.0" width="619" height="1" fill="#ebebeb"/>
<rect x="34" y="416.5" width="619" height="1" fill="#ebebeb"/>
<rect x="34" y="438.0" width="619" height="1" fill="#ebebeb"/>
<circle cx="623.9" cy="278.2" r="2.25" fill="none" stroke="#3a3a3a" stroke-width="1.3"/><circle cx="620.1" cy="281.9" r="1.25" fill="#8a8a8a" stroke="#555" stroke-width="0.5"/>
<circle cx="623.9" cy="299.7" r="2.25" fill="none" stroke="#3a3a3a" stroke-width="1.3"/><circle cx="620.1" cy="303.4" r="1.25" fill="#8a8a8a" stroke="#555" stroke-width="0.5"/>
<circle cx="623.9" cy="321.2" r="2.25" fill="none" stroke="#3a3a3a" stroke-width="1.3"/><circle cx="620.1" cy="324.9" r="1.25" fill="#8a8a8a" stroke="#555" stroke-width="0.5"/>
<circle cx="623.9" cy="342.7" r="2.25" fill="none" stroke="#3a3a3a" stroke-width="1.3"/><circle cx="620.1" cy="346.4" r="1.25" fill="#8a8a8a" stroke="#555" stroke-width="0.5"/>
<circle cx="623.9" cy="364.2" r="2.25" fill="none" stroke="#3a3a3a" stroke-width="1.3"/><circle cx="620.1" cy="367.9" r="1.25" fill="#8a8a8a" stroke="#555" stroke-width="0.5"/>
<circle cx="623.9" cy="385.7" r="2.25" fill="none" stroke="#3a3a3a" stroke-width="1.3"/><circle cx="620.1" cy="389.4" r="1.25" fill="#8a8a8a" stroke="#555" stroke-width="0.5"/>
<circle cx="623.9" cy="407.2" r="2.25" fill="none" stroke="#3a3a3a" stroke-width="1.3"/><circle cx="620.1" cy="410.9" r="1.25" fill="#8a8a8a" stroke="#555" stroke-width="0.5"/>
<circle cx="623.9" cy="428.7" r="2.25" fill="none" stroke="#3a3a3a" stroke-width="1.3"/><circle cx="620.1" cy="432.4" r="1.25" fill="#8a8a8a" stroke="#555" stroke-width="0.5"/>
</svg>
</body></html>
